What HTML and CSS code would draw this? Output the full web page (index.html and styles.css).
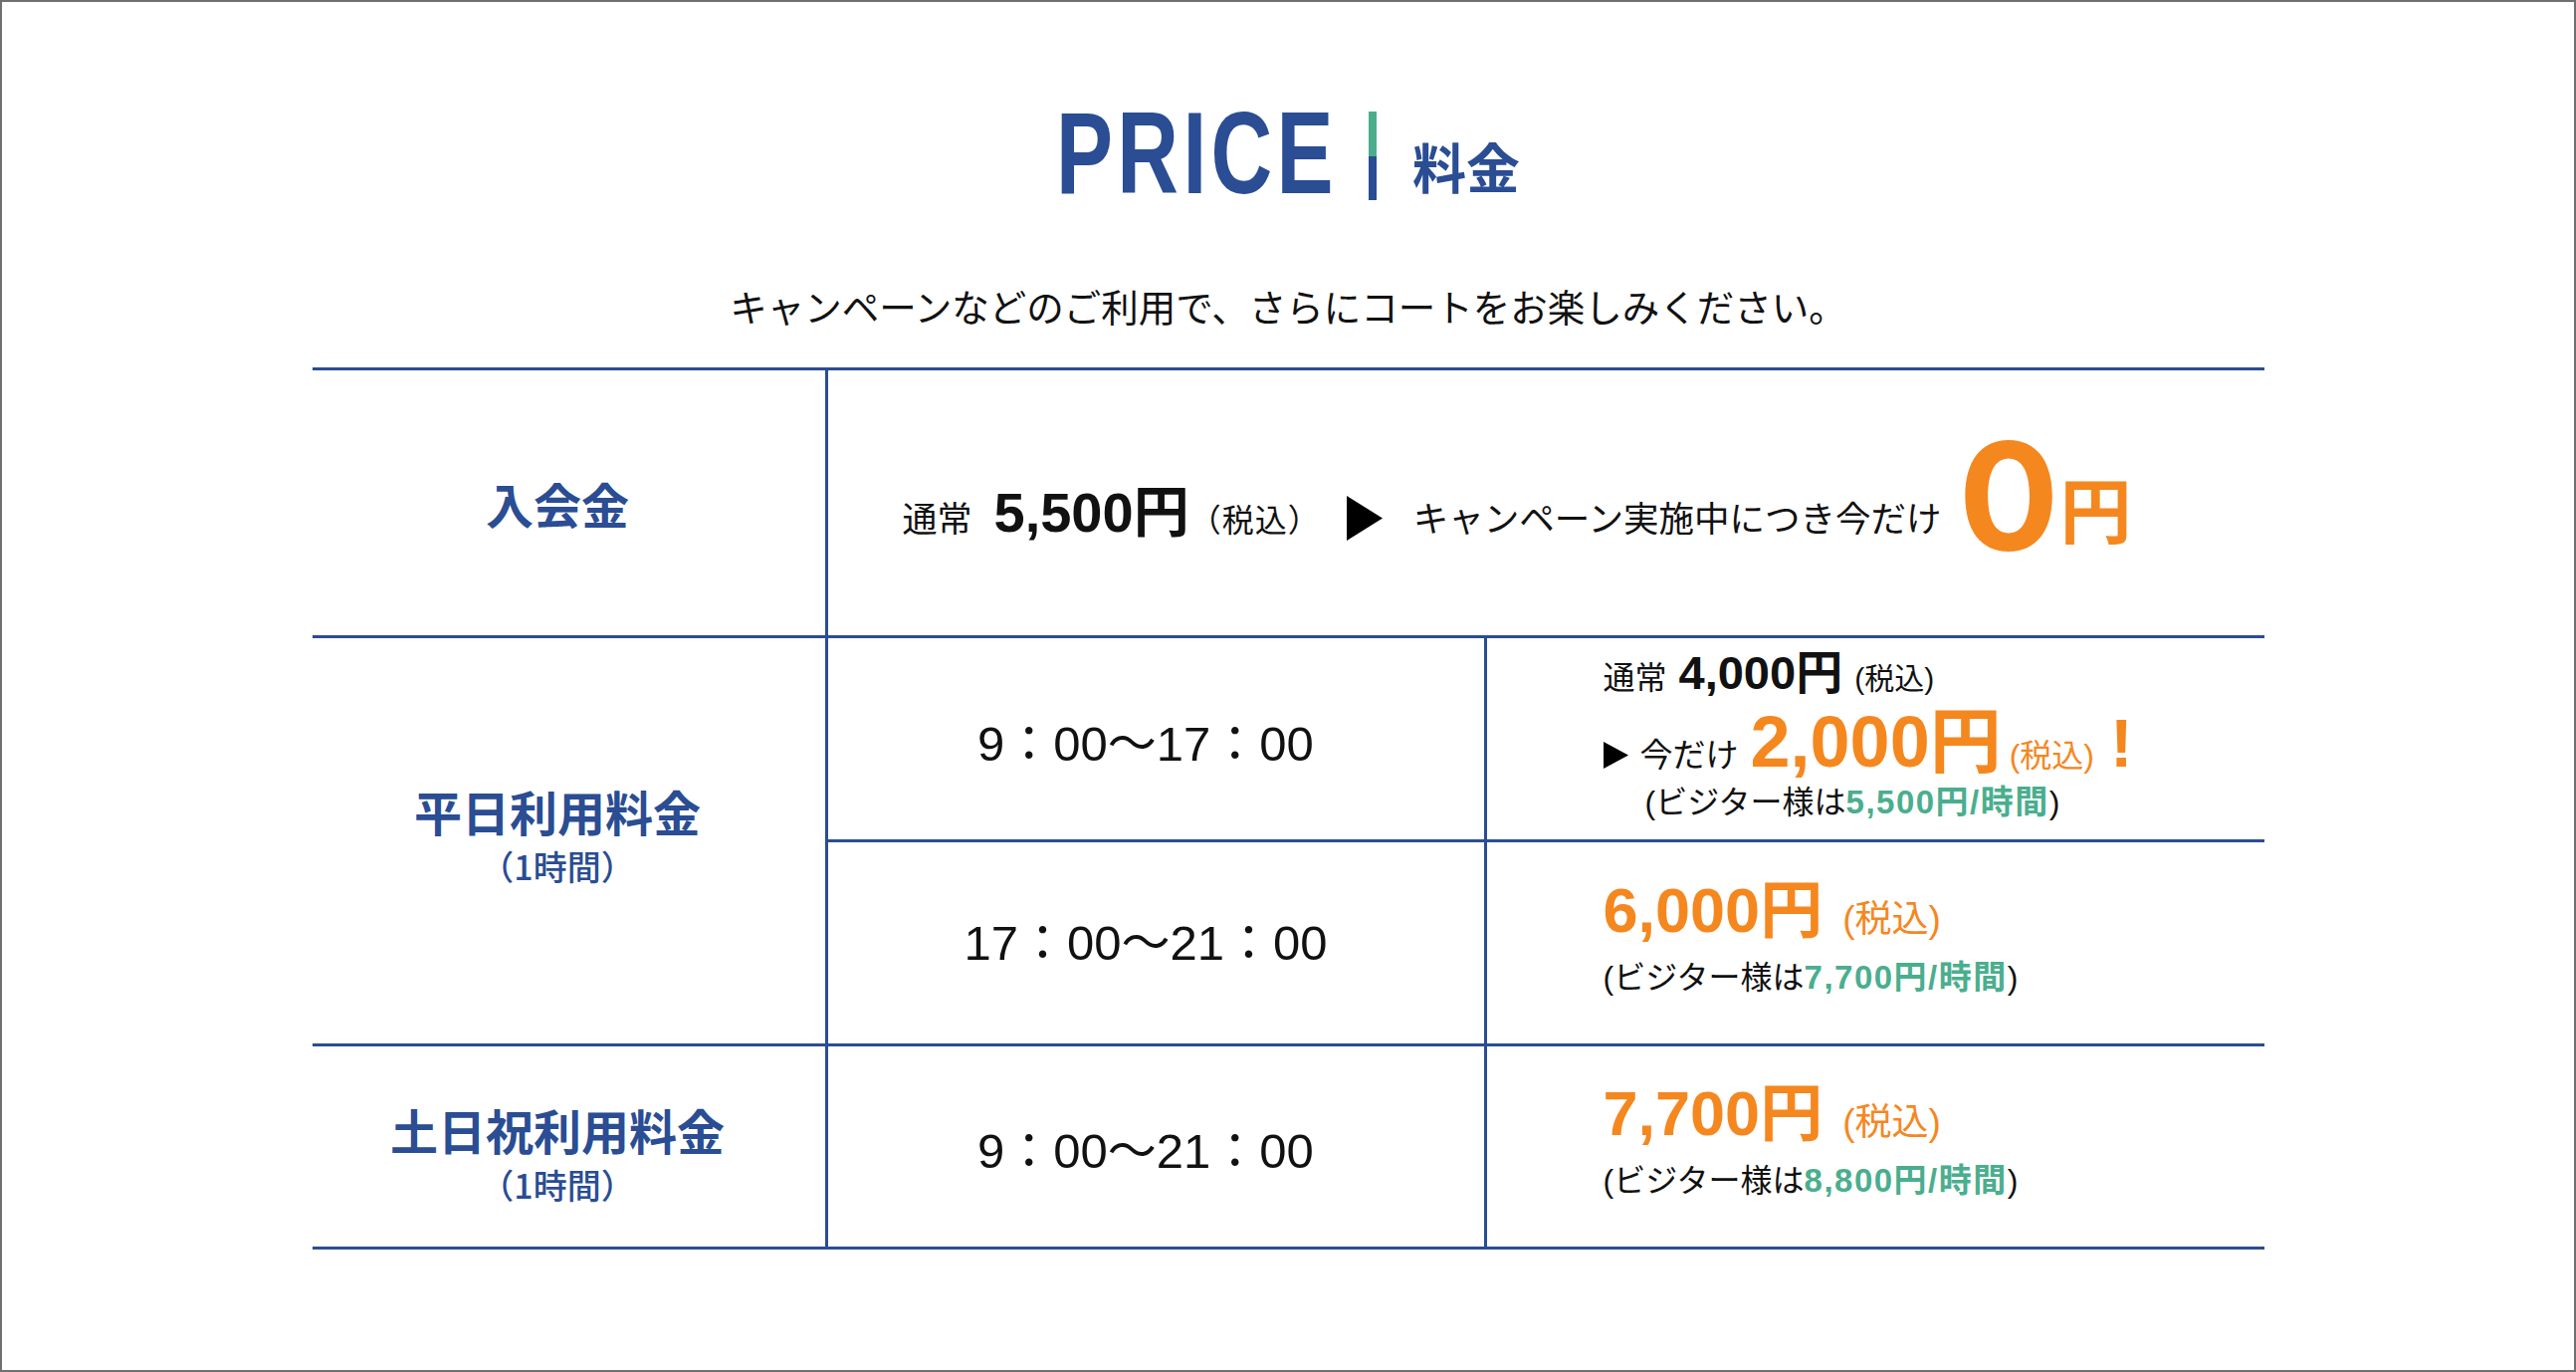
FILE: index.html
```html
<!DOCTYPE html>
<html lang="ja">
<head>
<meta charset="utf-8">
<title>PRICE 料金</title>
<link rel="stylesheet" href="styles.css">
</head>
<body>
<div class="page">
  <header class="heading">
    <h1 class="heading-en"><span class="heading-en-text">PRICE</span></h1>
    <span class="heading-bar"></span>
    <span class="heading-ja">料金</span>
  </header>
  <p class="lead">キャンペーンなどのご利用で、さらにコートをお楽しみください。</p>

  <div class="price-table">
    <div class="cell cell-label">
      <div class="label-main">入会金</div>
    </div>
    <div class="cell cell-entry">
      <div class="entry-line"><span class="entry-normal">通常</span><span class="entry-price">5,500円</span><span class="entry-tax">（税込）</span><svg class="entry-arrow" width="36" height="45" viewBox="0 0 36 45"><polygon points="0,0 36,22.5 0,45" fill="#000"/></svg><span class="entry-campaign">キャンペーン実施中につき今だけ</span><span class="entry-zero">0</span><span class="entry-yen">円</span></div>
    </div>

    <div class="cell cell-label cell-weekday">
      <div class="label-main">平日利用料金</div>
      <div class="label-sub">（1時間）</div>
    </div>
    <div class="cell cell-time">9：00〜17：00</div>
    <div class="cell cell-price cell-price-campaign">
      <div class="pl-normal"><span class="pl-normal-label">通常</span><span class="pl-normal-price">4,000円</span><span class="pl-normal-tax">(税込)</span></div>
      <div class="pl-now"><svg class="pl-arrow" width="25" height="27" viewBox="0 0 25 27"><polygon points="0,0 25,13.5 0,27" fill="#000"/></svg><span class="pl-now-label">今だけ</span><span class="pl-now-price">2,000円</span><span class="pl-now-tax">(税込)</span><span class="pl-now-bang">!</span></div>
      <div class="visitor visitor-indent">(ビジター様は<span class="visitor-price">5,500円/時間</span>)</div>
    </div>

    <div class="cell cell-time cell-time-evening">17：00〜21：00</div>
    <div class="cell cell-price cell-price-simple">
      <div class="pl-main"><span class="pl-main-price">6,000円</span><span class="pl-main-tax">(税込)</span></div>
      <div class="visitor">(ビジター様は<span class="visitor-price">7,700円/時間</span>)</div>
    </div>

    <div class="cell cell-label cell-weekend">
      <div class="label-main">土日祝利用料金</div>
      <div class="label-sub">（1時間）</div>
    </div>
    <div class="cell cell-time">9：00〜21：00</div>
    <div class="cell cell-price cell-price-simple">
      <div class="pl-main"><span class="pl-main-price">7,700円</span><span class="pl-main-tax">(税込)</span></div>
      <div class="visitor">(ビジター様は<span class="visitor-price">8,800円/時間</span>)</div>
    </div>
  </div>
</div>
</body>
</html>
```

FILE: styles.css
```css
* {
  margin: 0;
  padding: 0;
  box-sizing: border-box;
}

html,
body {
  background: #ffffff;
}

body {
  font-family: "Liberation Sans", "Noto Sans CJK JP", sans-serif;
  color: #111111;
}

.page {
  width: 2588px;
  height: 1378px;
  border: 2px solid #707070;
  background: #ffffff;
}

/* ---------- heading ---------- */
.heading {
  display: flex;
  justify-content: center;
  align-items: flex-start;
  height: 117px;
  margin-top: 93px;
}

.heading-en {
  width: 272px;
  font-family: "Liberation Sans", sans-serif;
  font-weight: 700;
  font-size: 117px;
  line-height: 117px;
  color: #2a4d93;
  white-space: nowrap;
}

.heading-en-text {
  display: inline-block;
  letter-spacing: 6px;
  transform: scaleX(0.73);
  transform-origin: left center;
}

.heading-bar {
  width: 8px;
  height: 89px;
  margin-top: 17px;
  margin-left: 42px;
  background: linear-gradient(to bottom, #4aae8e 0, #4aae8e 50%, #2a4d93 50%, #2a4d93 100%);
}

.heading-ja {
  font-family: "Noto Sans CJK JP", sans-serif;
  font-weight: 700;
  font-size: 54px;
  line-height: 54px;
  margin-top: 45px;
  margin-left: 36px;
  color: #2a4d93;
}

.lead {
  margin-top: 69px;
  text-align: center;
  font-family: "Noto Sans CJK JP", sans-serif;
  font-size: 37.5px;
  line-height: 52px;
  color: #111111;
}

/* ---------- table ---------- */
.price-table {
  width: 1961px;
  margin: 36px auto 0;
  display: grid;
  grid-template-columns: 515px 662px 1fr;
  grid-template-rows: 269px 205px 205px 204px;
  border-top: 3px solid #2a4d93;
}

.cell {
  border-bottom: 3px solid #2a4d93;
  display: flex;
  flex-direction: column;
  justify-content: center;
}

.cell-entry,
.cell-time,
.cell-price {
  border-left: 3px solid #2a4d93;
}

.cell-label {
  align-items: center;
  padding-right: 22px;
  color: #2a4d93;
}

.cell-weekday {
  grid-row: 2 / 4;
  padding-bottom: 6px;
}

.cell-weekend {
  padding-top: 20px;
}

.label-main {
  font-family: "Noto Sans CJK JP", sans-serif;
  font-weight: 700;
  font-size: 48px;
  line-height: 56px;
}

.label-sub {
  font-family: "Noto Sans CJK JP", sans-serif;
  font-weight: 500;
  font-size: 34px;
  line-height: 56px;
}

/* entry fee row */
.cell-entry {
  grid-column: 2 / 4;
  padding-left: 75px;
  padding-bottom: 12px;
}

.entry-line {
  white-space: nowrap;
  line-height: 1;
}

.entry-normal {
  font-size: 35px;
}

.entry-price {
  font-size: 56px;
  font-weight: 700;
  margin-left: 22px;
}

.entry-tax {
  font-size: 32px;
  letter-spacing: 1px;
}

.entry-arrow {
  margin-left: 26px;
  vertical-align: -9px;
}

.entry-campaign {
  font-size: 35.5px;
  margin-left: 31px;
}

.entry-zero {
  font-family: "Inter", "Liberation Sans", sans-serif;
  font-size: 150px;
  font-weight: 700;
  color: #f5871f;
  margin-left: 17px;
  vertical-align: -19px;
}

.entry-yen {
  font-size: 72px;
  font-weight: 700;
  color: #f5871f;
  margin-left: 1px;
  vertical-align: -6px;
}

/* time column */
.cell-time {
  align-items: center;
  padding-right: 20px;
  padding-top: 10px;
  font-size: 49px;
  line-height: 1;
  white-space: nowrap;
}

.cell-time-evening {
  padding-top: 0;
}

/* price column */
.cell-price {
  padding-left: 117px;
  white-space: nowrap;
}

.cell-price-campaign {
  padding-bottom: 20px;
}

.cell-price-simple {
  padding-bottom: 8px;
}

.pl-normal {
  line-height: 56px;
}

.pl-normal-label {
  font-size: 32px;
}

.pl-normal-price {
  font-size: 47px;
  font-weight: 700;
  margin-left: 12px;
}

.pl-normal-tax {
  font-size: 30px;
  margin-left: 12px;
}

.pl-now {
  line-height: 60px;
}

.pl-arrow {
  vertical-align: -2px;
}

.pl-now-label {
  font-size: 33px;
  margin-left: 12px;
}

.pl-now-price {
  font-size: 72px;
  font-weight: 700;
  color: #f5871f;
  margin-left: 12px;
}

.pl-now-tax {
  font-size: 32px;
  color: #f5871f;
  margin-left: 8px;
}

.pl-now-bang {
  font-size: 68px;
  font-weight: 700;
  color: #f5871f;
  margin-left: 16px;
}

.visitor {
  font-size: 32px;
  line-height: 42px;
  color: #111111;
}

.visitor-indent {
  margin-left: 42px;
  line-height: 22px;
}

.visitor-price {
  color: #4aae8e;
  font-size: 33px;
  font-weight: 700;
  letter-spacing: 1.5px;
}

.pl-main {
  line-height: 60px;
}

.pl-main-price {
  font-size: 63px;
  font-weight: 700;
  color: #f5871f;
}

.pl-main-tax {
  font-size: 37px;
  color: #f5871f;
  margin-left: 20px;
}
```
